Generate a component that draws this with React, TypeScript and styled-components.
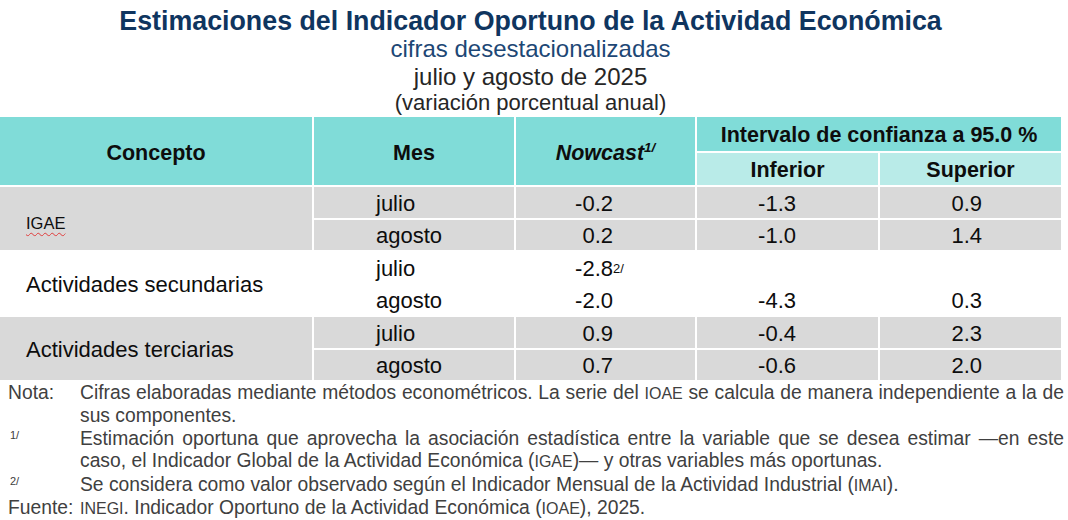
import React from "react";
import styled, { createGlobalStyle } from "styled-components";

const GlobalStyle = createGlobalStyle`
  html, body { margin: 0; padding: 0; background: #ffffff; }
  body { font-family: "Liberation Sans", Arial, sans-serif; }
`;

const Page = styled.div`
  width: 1068px;
  height: 520px;
  overflow: hidden;
  background: #ffffff;
`;

const Sheet = styled.div`
  width: 1068px;
  display: flex;
  flex-direction: column;
`;

const Heading = styled.header`
  width: 1061px;
  display: flex;
  flex-direction: column;
  align-items: center;
  padding: 4px 0 6px;
`;

const Title = styled.h1`
  margin: 0;
  font-size: 26.8px;
  line-height: 35px;
  font-weight: 700;
  color: #0f355f;
  white-space: nowrap;
`;

const SubLine = styled.div<{ $size: number; $lh: number; $color: string }>`
  font-size: ${(p) => p.$size}px;
  line-height: ${(p) => p.$lh}px;
  color: ${(p) => p.$color};
`;

const Grid = styled.div`
  width: 1061px;
  display: grid;
  grid-template-columns: 312px 200px 179px 181px 181px;
  grid-template-rows: 34px 32px repeat(6, 30.5px);
  gap: 2px;
  background: #ffffff;
  color: #0d0d0d;
`;

const HeadCell = styled.div<{ $light?: boolean; $rows?: number; $cols?: number }>`
  display: flex;
  align-items: center;
  justify-content: center;
  padding-top: ${(p) => ((p.$rows ?? 1) > 1 ? 4 : 2)}px;
  background: ${(p) => (p.$light ? "#b9ebe8" : "#80dcd8")};
  font-size: 21.5px;
  font-weight: 700;
  grid-row: span ${(p) => p.$rows ?? 1};
  grid-column: span ${(p) => p.$cols ?? 1};
`;

const Italic = styled.span`
  font-style: italic;
`;

const HeadSup = styled.sup`
  font-size: 13.5px;
  line-height: 0;
  vertical-align: 8px;
  font-style: italic;
`;

const bandColor = (b: "gray" | "white") => (b === "gray" ? "#d9d9d9" : "#ffffff");

const ConceptCell = styled.div<{ $band: "gray" | "white" }>`
  grid-row: span 2;
  display: flex;
  align-items: center;
  padding: 3px 0 0 26px;
  background: ${(p) => bandColor(p.$band)};
  font-size: 22px;
`;

const Abbrev = styled.span`
  font-size: 16.5px;
  padding-top: 6px;
  text-decoration: underline wavy #e03c3c;
  text-decoration-thickness: 1px;
  text-underline-offset: 3px;
`;

const MonthCell = styled.div<{ $band: "gray" | "white" }>`
  display: flex;
  align-items: center;
  padding: 3px 0 0 62px;
  background: ${(p) => bandColor(p.$band)};
  font-size: 22px;
`;

const ValueCell = styled.div<{ $band: "gray" | "white"; $pr: number }>`
  display: flex;
  align-items: center;
  justify-content: flex-end;
  padding-top: 3px;
  padding-right: ${(p) => p.$pr}px;
  background: ${(p) => bandColor(p.$band)};
  font-size: 22px;
  white-space: nowrap;
`;

const ValueSup = styled.span`
  display: inline-block;
  width: 0;
  font-size: 13px;
  line-height: 0;
  vertical-align: 9px;
  white-space: nowrap;
`;

const Notes = styled.div`
  display: flex;
  flex-direction: column;
  padding: 2px 0 0 8px;
  font-size: 19.3px;
  line-height: 22px;
  color: #404040;
`;

const NoteRow = styled.div<{ $gap?: number }>`
  display: grid;
  grid-template-columns: 72px 984px;
  margin-top: ${(p) => p.$gap ?? 0}px;
`;

const NoteLabel = styled.div<{ $indent?: number }>`
  padding-left: ${(p) => p.$indent ?? 0}px;
`;

const NoteMark = styled.span`
  font-size: 11px;
  line-height: 0;
  vertical-align: 6px;
`;

const NoteText = styled.div`
  text-align: justify;
`;

const Small = styled.span`
  font-size: 16px;
`;

type Band = "gray" | "white";

interface Row {
  month: string;
  nowcast: string;
  sup?: string;
  low: string;
  high: string;
}

interface Group {
  concept: React.ReactNode;
  band: Band;
  rows: Row[];
}

const groups: Group[] = [
  {
    concept: <Abbrev>IGAE</Abbrev>,
    band: "gray",
    rows: [
      { month: "julio", nowcast: "-0.2", low: "-1.3", high: "0.9" },
      { month: "agosto", nowcast: "0.2", low: "-1.0", high: "1.4" },
    ],
  },
  {
    concept: "Actividades secundarias",
    band: "white",
    rows: [
      { month: "julio", nowcast: "-2.8", sup: "2/", low: "", high: "" },
      { month: "agosto", nowcast: "-2.0", low: "-4.3", high: "0.3" },
    ],
  },
  {
    concept: "Actividades terciarias",
    band: "gray",
    rows: [
      { month: "julio", nowcast: "0.9", low: "-0.4", high: "2.3" },
      { month: "agosto", nowcast: "0.7", low: "-0.6", high: "2.0" },
    ],
  },
];

export default function App() {
  return (
    <Page>
      <GlobalStyle />
      <Sheet>
        <Heading>
          <Title>Estimaciones del Indicador Oportuno de la Actividad Económica</Title>
          <SubLine $size={24} $lh={20} $color="#1d4775">
            cifras desestacionalizadas
          </SubLine>
          <SubLine $size={24} $lh={35} $color="#262626">
            julio y agosto de 2025
          </SubLine>
          <SubLine $size={22} $lh={17} $color="#262626">
            (variación porcentual anual)
          </SubLine>
        </Heading>

        <Grid>
          <HeadCell $rows={2}>Concepto</HeadCell>
          <HeadCell $rows={2}>Mes</HeadCell>
          <HeadCell $rows={2}>
            <Italic>
              Nowcast
              <HeadSup>1/</HeadSup>
            </Italic>
          </HeadCell>
          <HeadCell $cols={2}>Intervalo de confianza a 95.0 %</HeadCell>
          <HeadCell $light>Inferior</HeadCell>
          <HeadCell $light>Superior</HeadCell>

          {groups.map((g, gi) =>
            g.rows.map((r, ri) => (
              <React.Fragment key={`${gi}-${ri}`}>
                {ri === 0 && <ConceptCell $band={g.band}>{g.concept}</ConceptCell>}
                <MonthCell $band={g.band}>{r.month}</MonthCell>
                <ValueCell $band={g.band} $pr={82}>
                  {r.nowcast}
                  {r.sup && <ValueSup>{r.sup}</ValueSup>}
                </ValueCell>
                <ValueCell $band={g.band} $pr={82}>{r.low}</ValueCell>
                <ValueCell $band={g.band} $pr={79}>{r.high}</ValueCell>
              </React.Fragment>
            ))
          )}
        </Grid>

        <Notes>
          <NoteRow>
            <NoteLabel>Nota:</NoteLabel>
            <NoteText>
              Cifras elaboradas mediante métodos econométricos. La serie del <Small>IOAE</Small> se
              calcula de manera independiente a la de sus componentes.
            </NoteText>
          </NoteRow>
          <NoteRow $gap={1}>
            <NoteLabel $indent={2}>
              <NoteMark>1/</NoteMark>
            </NoteLabel>
            <NoteText>
              Estimación oportuna que aprovecha la asociación estadística entre la variable que se
              desea estimar —en este caso, el Indicador Global de la Actividad Económica (
              <Small>IGAE</Small>)— y otras variables más oportunas.
            </NoteText>
          </NoteRow>
          <NoteRow $gap={1}>
            <NoteLabel $indent={2}>
              <NoteMark>2/</NoteMark>
            </NoteLabel>
            <NoteText>
              Se considera como valor observado según el Indicador Mensual de la Actividad
              Industrial (<Small>IMAI</Small>).
            </NoteText>
          </NoteRow>
          <NoteRow>
            <NoteLabel>Fuente:</NoteLabel>
            <NoteText>
              <Small>INEGI</Small>. Indicador Oportuno de la Actividad Económica (<Small>IOAE</Small>),
              2025.
            </NoteText>
          </NoteRow>
        </Notes>
      </Sheet>
    </Page>
  );
}
